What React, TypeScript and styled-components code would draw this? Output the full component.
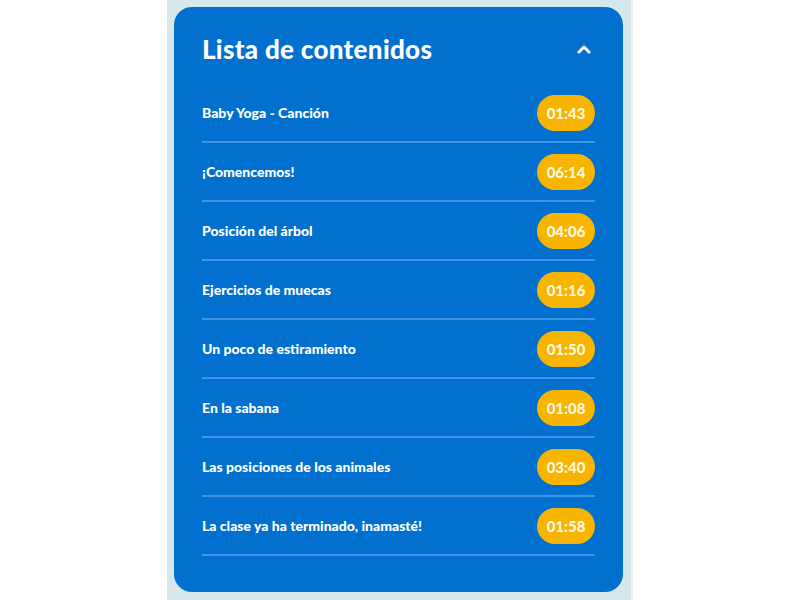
import React from 'react';
import styled, { createGlobalStyle } from 'styled-components';

type Item = { title: string; time: string };

const items: Item[] = [
  { title: 'Baby Yoga - Canción', time: '01:43' },
  { title: '¡Comencemos!', time: '06:14' },
  { title: 'Posición del árbol', time: '04:06' },
  { title: 'Ejercicios de muecas', time: '01:16' },
  { title: 'Un poco de estiramiento', time: '01:50' },
  { title: 'En la sabana', time: '01:08' },
  { title: 'Las posiciones de los animales', time: '03:40' },
  { title: 'La clase ya ha terminado, inamasté!', time: '01:58' },
];

const GlobalStyle = createGlobalStyle`
  html, body {
    margin: 0;
    padding: 0;
    background: #ffffff;
    font-family: 'Lato', 'Noto Sans', sans-serif;
  }
`;

const Page = styled.div`
  display: flex;
  justify-content: center;
  height: 600px;
`;

const Strip = styled.div`
  width: 466px;
  height: 600px;
  background: #d7e8ec;
  padding: 7px 8px 0 7px;
  box-sizing: border-box;
  border-right: 2px solid #eef3f4;
`;

const Card = styled.section`
  background: #0170cf;
  border-radius: 18px;
  height: 585px;
  box-sizing: border-box;
  padding: 0 28px;
  display: flex;
  flex-direction: column;
`;

const Header = styled.div`
  display: flex;
  align-items: center;
  justify-content: space-between;
  height: 77px;
  padding-top: 6px;
  box-sizing: border-box;
`;

const Title = styled.h2`
  margin: 0;
  color: #ffffff;
  font-size: 26px;
  font-weight: 900;
  letter-spacing: 0.3px;
`;

const Toggle = styled.button`
  border: none;
  background: none;
  padding: 0;
  margin-right: 4px;
  display: flex;
  cursor: pointer;
`;

const List = styled.ul`
  list-style: none;
  margin: 0;
  padding: 0;
`;

const Row = styled.li`
  display: flex;
  align-items: center;
  justify-content: space-between;
  height: 57px;
  border-bottom: 2px solid #3f95e6;
`;

const RowTitle = styled.span`
  color: #ffffff;
  font-size: 14px;
  font-weight: 900;
`;

const Badge = styled.span`
  background: #f7b500;
  color: #fff7df;
  font-size: 15px;
  font-weight: 900;
  height: 36px;
  min-width: 58px;
  padding: 0 7px;
  box-sizing: border-box;
  border-radius: 18px;
  display: flex;
  align-items: center;
  justify-content: center;
`;

const App = () => {
  return (
    <>
      <GlobalStyle />
      <Page>
        <Strip>
          <Card>
            <Header>
              <Title>Lista de contenidos</Title>
              <Toggle aria-label="Contraer">
                <svg width="14" height="10" viewBox="0 0 14 10">
                  <path
                    d="M2 8 L7 3 L12 8"
                    fill="none"
                    stroke="#ffffff"
                    strokeWidth="3"
                    strokeLinecap="round"
                    strokeLinejoin="round"
                  />
                </svg>
              </Toggle>
            </Header>
            <List>
              {items.map((item) => (
                <Row key={item.title}>
                  <RowTitle>{item.title}</RowTitle>
                  <Badge>{item.time}</Badge>
                </Row>
              ))}
            </List>
          </Card>
        </Strip>
      </Page>
    </>
  );
};

export default App;
